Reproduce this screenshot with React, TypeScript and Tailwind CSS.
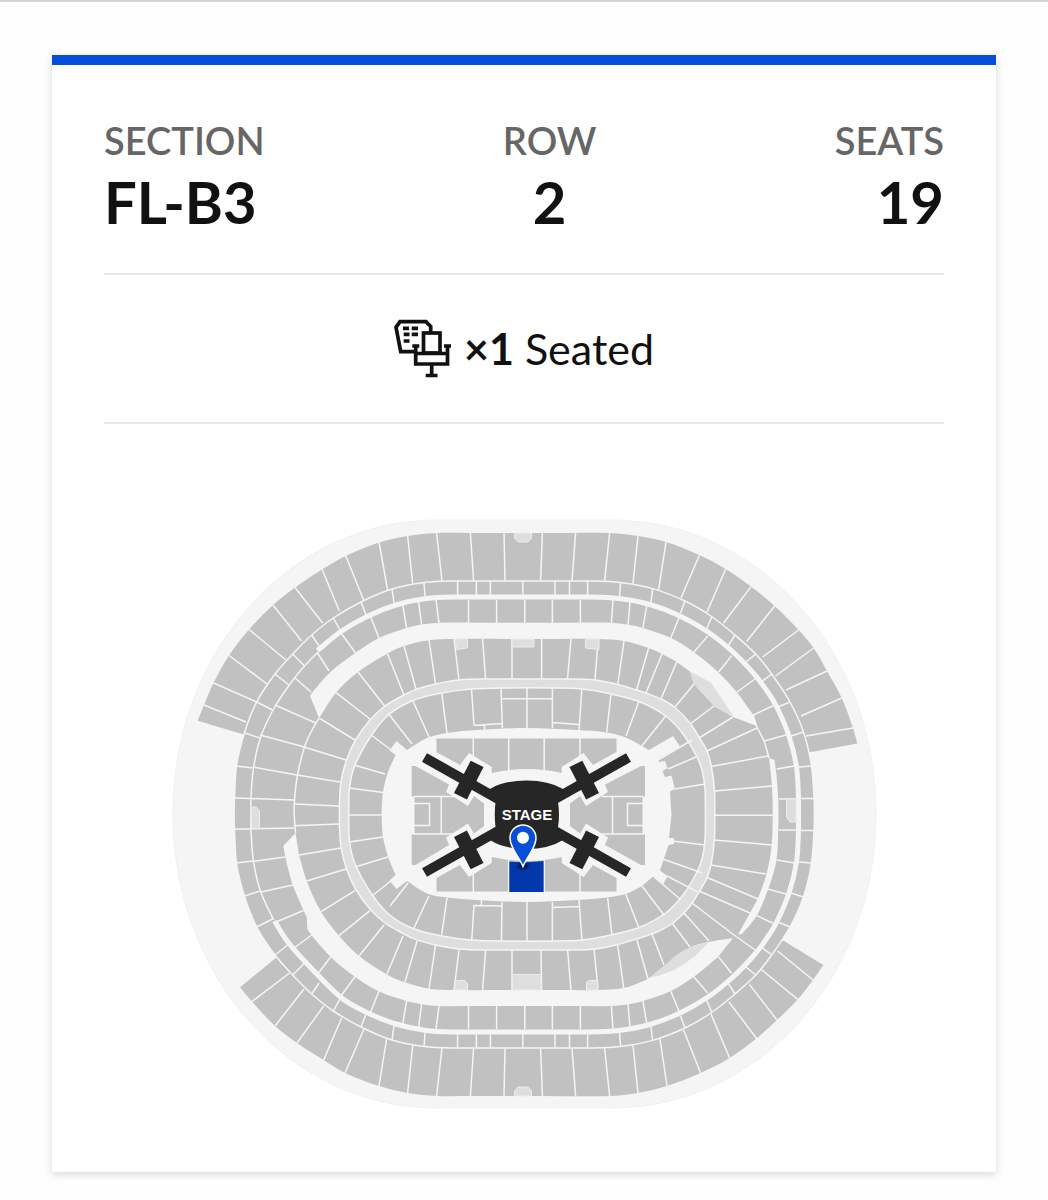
import React from "react";

type Pt = [number, number];
type Seg = [number, number, number, number];

const MID = 1629;

const r = (n: number) => Math.round(n * 10) / 10;

/** Smooth curve through the points, starting with the first point's coordinates. */
function curve(p: Pt[]): string {
  let d = `${p[0][0]},${p[0][1]}`;
  for (let i = 0; i < p.length - 1; i++) {
    const a = p[i - 1] ?? p[i];
    const b = p[i];
    const c = p[i + 1];
    const e = p[i + 2] ?? c;
    const len = Math.hypot(c[0] - b[0], c[1] - b[1]);
    const k1 = len / (Math.hypot(c[0] - a[0], c[1] - a[1]) || 1) / 3;
    const k2 = len / (Math.hypot(e[0] - b[0], e[1] - b[1]) || 1) / 3;
    d += ` C${r(b[0] + (c[0] - a[0]) * k1)},${r(b[1] + (c[1] - a[1]) * k1)} ${r(c[0] - (e[0] - b[0]) * k2)},${r(c[1] - (e[1] - b[1]) * k2)} ${c[0]},${c[1]}`;
  }
  return d;
}

const flip = (p: Pt[]): Pt[] => p.map(([x, y]) => [x, MID - y] as Pt);
const back = (p: Pt[]): Pt[] => [...p].reverse();
const ring = (top: Pt[]) => `M${curve([...top, ...back(flip(top))])}Z`;
const lines = (s: Seg[]) => s.map(([a, b, c, d]) => `M${a} ${b}L${c} ${d}`).join("");
const flipSegs = (s: Seg[]): Seg[] => s.map(([a, b, c, d]) => [a, MID - b, c, MID - d]);

const upperTop: Pt[] = [
  [197.7, 720.7], [204, 705], [213.5, 683], [229, 655.5], [249, 629.5], [273, 605], [295, 587.5], [322, 569.5],
  [345.7, 556], [379, 542.5], [407.6, 536], [436.6, 533], [470, 533], [542, 533], [609.5, 533], [638, 536],
  [666, 542], [699.5, 555], [725.7, 569], [751, 586.6], [774.7, 606], [798.6, 630], [813.6, 648], [827, 671],
  [841.7, 698], [853, 728], [857.3, 743.6],
];
const upperBottom: Pt[] = [
  [240, 987.3], [252, 1001.5], [275, 1026], [297, 1043], [323.6, 1060], [345, 1073], [379, 1086], [407.6, 1093],
  [436.6, 1096], [470, 1096], [542, 1096], [609.5, 1096], [638, 1093], [667, 1086], [700.6, 1073], [729.6, 1058],
  [757, 1038], [777, 1020], [798, 999], [813, 980], [823.3, 965],
];
const clubOuter: Pt[] = [
  [234, 814], [234.5, 798], [236.5, 766], [244.5, 732.7], [256.7, 702], [275, 674], [292.7, 654], [311.7, 635],
  [333.3, 618], [361, 602], [392, 589], [424, 582.5], [457.6, 581], [523, 581], [588, 581], [620.6, 582.5],
  [652.6, 588.6], [685, 601], [711.6, 616.5], [735, 635], [755.7, 654], [771.7, 674], [790, 702], [803.5, 732],
  [811.5, 766], [814, 798], [814.5, 814],
];
const clubInner: Pt[] = [
  [251, 814], [251, 798], [253.5, 768], [260.5, 737.7], [273.6, 709], [290, 684], [304.5, 666], [318, 652],
];
const aisle: Pt[] = [
  [317.5, 650.5], [341, 631.5], [368, 616], [396, 605], [426, 598.5], [457, 597], [523, 597], [588, 597],
  [619, 598.5], [650, 604.5], [680, 616], [708, 632], [733, 652], [755, 675], [768, 692.5], [777, 707.5],
  [789, 736], [796.5, 767], [798.5, 799], [798.5, 814],
];
const aisleFull: Pt[] = [...aisle, ...back(flip(aisle)).slice(1, -1), [298, 954], [285, 938], [274.5, 921]];
const terraceInnerTop: Pt[] = [
  [312.6, 692], [331, 671.5], [355.6, 652.8], [379, 638], [406.6, 628], [421.6, 624.6], [439, 622.8], [480, 622.8],
  [570, 622.8], [610, 622.8], [628.6, 624.8], [643, 628], [670.6, 637.8], [693.6, 652], [718, 672], [736.6, 692],
  [753, 714.5],
];
const lowerOuterTop: Pt[] = [
  [319, 718], [336, 692.7], [358, 672], [387.6, 653.5], [404, 646], [429, 640.3], [454, 639], [512, 639],
  [560, 639], [597, 639], [624, 641], [648.6, 648], [662, 654], [676.7, 662], [690, 671.5],
];
const lowerLeft: Pt[] = [
  [319, 718], [311, 732], [304.5, 747], [297.5, 775], [294.5, 800], [294.2, 814], [295.5, 833],
];
const walkOuter: Pt[] = [
  [339.5, 814], [339.5, 803], [341, 781.6], [346.5, 760], [355.5, 740], [370, 720], [385, 706], [404, 695],
  [416, 689.4], [435.5, 684], [459, 680], [486, 679], [527, 679], [567, 679], [595, 680], [617.6, 684.5],
  [636.6, 690], [646, 693], [661, 699], [675, 707.5], [690, 723], [699.5, 738], [707, 751], [711.5, 767],
  [714.5, 791], [714.7, 814],
];
const walkInner: Pt[] = [
  [348.7, 814], [349.5, 788], [355, 765], [371.7, 735], [389, 714.5], [413, 700.5], [441.7, 693], [471, 689],
  [501, 688], [552, 688], [581.7, 689], [611, 694], [639, 701.5], [665.7, 716], [683, 734], [697, 757],
  [702.5, 772], [705, 790], [705.5, 814],
];

const upperDividers: Seg[] = [
  [204, 705, 246, 722], [213.5, 683, 256.7, 702], [229, 655.5, 267, 684], [249, 629.5, 286, 660],
  [273, 605, 301.6, 641], [295, 587.5, 322.6, 623], [322, 569, 339.3, 611], [345.7, 555.7, 363.6, 600],
  [379, 542, 387.6, 590], [407.6, 536, 412.7, 583.5],
  [436.6, 533, 442, 581], [470.4, 533, 473.6, 581], [504, 533, 505, 581], [542.4, 533, 540.6, 581],
  [575.6, 533, 572, 581], [609.6, 533, 604.6, 581], [638, 536, 633, 583.5], [666, 542, 658.6, 590],
  [699.5, 555, 681, 598], [725.7, 569, 707, 612], [751, 586.6, 723.6, 623], [774.7, 606, 746.6, 641.5],
  [798.6, 630, 762.6, 657], [813.6, 648, 775.6, 676], [827, 671, 786, 690], [841.7, 698, 801, 716],
  [853, 728, 806, 736],
];
const upperBottomDividers: Seg[] = [
  [252, 1001.5, 289.6, 973], [275, 1026, 304, 989], [297, 1043, 323.6, 1006], [323.6, 1060, 341.6, 1018],
  [345, 1073, 364, 1029], [379, 1086, 386.6, 1039], ...flipSegs(upperDividers.slice(9, 17)),
  [667, 1086, 660, 1039], [700.6, 1073, 683.6, 1030], [729.6, 1058, 711, 1014], [757, 1039, 729, 1002],
  [777, 1020, 749.6, 984.6], [798, 999.6, 760.6, 969], [813, 980, 777.6, 951],
];
const clubDividers: Seg[] = [
  [234.5, 798, 251, 798.5], [236, 766, 253, 768], [244, 732.7, 260, 738], [256.7, 702, 272.5, 710],
  [275, 674, 289, 685], [292.7, 654, 304.6, 666], [311.7, 635, 319, 646], [333.3, 618, 340, 630],
  [361, 602, 366, 615], [392, 589, 394, 603], [424, 582.5, 425, 596], [457.6, 581, 457.6, 595],
  [476.4, 581, 476.4, 595], [490.4, 581, 490.4, 595], [522.8, 581, 522.8, 595], [555, 581, 555, 595],
  [569.5, 581, 569.5, 595], [587.6, 581, 587.6, 595], [620.6, 582.5, 619.6, 596], [652.6, 589, 651, 602],
  [685, 601, 680.5, 613], [711.7, 617, 706.5, 629], [735, 635, 728, 646], [755.7, 654, 746, 662],
  [772, 674, 761, 682], [790, 702, 778, 707], [803.5, 732, 791, 736], [811.5, 766, 799, 767],
  [814, 798.5, 800, 798.5],
];
const terraceDividers: Seg[] = [
  [341.7, 634, 355.6, 653], [370.7, 617, 379, 638], [402.7, 604.7, 406.6, 628], [418.6, 601.6, 421.6, 625],
  [436, 600, 439, 623], [468.5, 600, 468.5, 623], [496.6, 600, 496.6, 623], [524.8, 600, 524.8, 623],
  [552.4, 600, 552.4, 623], [580.4, 600, 580.4, 623], [613, 600, 611.4, 623], [630, 601.6, 628, 625],
  [646.6, 606, 643, 628], [679, 618, 670.7, 638], [707.7, 636, 693.6, 652.6], [731.7, 655.7, 718.6, 672],
  [755, 679, 737, 692], [773, 705.7, 753.5, 715], [786, 735, 764, 741], [794.6, 766, 776.7, 769],
  [796.6, 799, 778.6, 799],
];
const terraceLeft: Seg[] = [
  [251, 798.5, 294, 800], [253, 767, 297, 775], [260, 735, 304.6, 747], [275, 705, 315.6, 723],
  [295, 678, 311, 692], [317.6, 653, 329, 671],
  [234, 829.3, 294, 828], [252, 861.5, 285, 857], [261, 892, 293, 885], [275, 922.5, 303.5, 910.5],
  [294, 948, 311.7, 935], [317.7, 974, 330.7, 957],
];
const lowerTopDividers: Seg[] = [
  [294.3, 804, 339.5, 806], [297, 775, 340, 782], [304, 747, 346, 760], [319, 718, 355, 740],
  [336, 692.7, 370, 719], [358, 672, 385, 706.5], [387.6, 654, 404, 695], [404, 646, 416, 689],
  [429, 640, 435.5, 684], [454, 639, 459, 680], [482.6, 639, 485.6, 679], [512, 639, 512, 679],
  [541.6, 639, 541.6, 679], [571, 639, 567.5, 679], [598, 641, 595, 680], [624, 641, 617.7, 685],
  [648.6, 648, 636.6, 690], [662, 654, 646, 693], [676.7, 662, 661, 699], [694, 684, 675, 707],
  [714, 706, 690, 724], [733, 717, 699, 738], [757, 728, 707, 751], [768, 756, 711, 766.5],
  [772, 786, 714.7, 791], [772.7, 815.3, 671, 815.3],
];
const lowerBottomDividers: Seg[] = [
  [294, 825.7, 339.5, 824], [299, 855, 341, 848], [306.7, 881, 346, 869], [321, 911.7, 355, 890.7],
  [339, 935.7, 370, 910.7], [359, 956, 384, 925], [387, 974, 403, 936], [405, 982, 417, 941],
  [429, 989, 435.5, 945], [454, 990, 459, 950], [482.6, 990, 485.6, 950], [512, 990, 512, 950],
  [541.6, 990, 541, 950], [571, 990, 567.6, 950], [598, 988, 594, 949], [623.7, 988, 617.7, 945],
  [648, 979, 637, 940], [664, 965, 652, 934], [690, 947, 672, 923], [709, 941, 683, 912],
  [736.7, 937, 690.7, 902], [750, 913, 699, 891], [758, 899, 706, 877], [766, 874, 711, 865],
  [772, 845, 714, 840],
];
const innerDividers: Seg[] = [
  [348, 815, 382, 815], [349, 788, 383, 792.5], [354, 765, 385, 774], [371.7, 735.5, 394, 752],
  [388, 713, 412, 744], [413, 701, 429, 737], [441.7, 693, 447, 733], [471.5, 689, 474, 725.5],
  [474, 725.5, 502, 723.5], [484.5, 725, 484.5, 730], [501, 688, 502.4, 728], [527, 688, 527, 728],
  [502, 698.7, 552, 698.7], [552.4, 688, 552.4, 728], [581.7, 690, 579, 731], [552, 722.5, 579, 724.5],
  [611, 694, 606.7, 732], [639, 701, 626, 736], [665.7, 716, 641, 747], [658, 760, 692, 740],
  [668, 769, 696, 757], [675, 789, 705, 784],
  [383, 837, 349, 842], [388, 857, 355, 867], [392, 880, 372, 896], [408, 883, 390, 906],
  [429, 895.7, 414, 928], [447, 898, 441.5, 936], [474, 905, 471.7, 941], [474, 905.5, 502, 906],
  [481.4, 900, 481.4, 905], [502, 902, 501.4, 941], [527, 902, 527, 941], [552.4, 902, 552.4, 941],
  [552, 907.6, 579.5, 906.4], [579, 900, 582, 941], [607.7, 898, 612, 935.7], [625.7, 894, 639, 928],
  [672, 841, 705, 845], [662.7, 859, 701.7, 872.7], [667, 876, 697, 891.7], [653, 876, 680, 899],
  [642, 886, 664, 915],
];

const SEAT = "#c1c1c1";
const LIGHT = "#f5f5f5";
const PALE = "#dedede";

const floorTop =
  "M436.5,738.5 H616.5 V752 L593,765 L583.5,753 L561.7,767 V773 Q527,765 491.7,773 V767 L469,753 L460,765 L436.5,752Z";
const floorLeft =
  "M411.7,766 H415.5 L449,784.5 L446,792 L468,806 L474,796 L484,803.5 V826 L474,833.5 L468,823.5 L446,837.5 L449,845 L415.5,865 H411.7 V834.5 H414.5 V796.5 H411.7Z";
const floorRight =
  "M645,766 H641 L605,784.5 L608,792 L586,806 L580,796 L570,803.5 V826 L580,833.5 L586,823.5 L608,837.5 L605,845 L641,865 H645 V834.5 H642.5 V796.5 H645Z";

function StageArm() {
  return (
    <g>
      <path d="M424.5 757.5L498 799" stroke="#262626" strokeWidth="10" />
      <path d="M470.7,760.7 L483.5,767 L466.9,799.5 L454,793Z" fill="#262626" />
    </g>
  );
}

function SeatMap() {
  return (
    <svg viewBox="104 500 840 630" className="block h-auto w-full" role="img" aria-label="Venue seat map">
      <defs>
        <radialGradient id="pin-shadow">
          <stop offset="0" stopColor="#000" stopOpacity="0.75" />
          <stop offset="1" stopColor="#000" stopOpacity="0" />
        </radialGradient>
      </defs>
      <path
        d="M437,520 H612 C758,520 876,650 876,814 C876,978 758,1108 612,1108 H437 C291,1108 173,978 173,814 C173,650 291,520 437,520Z"
        fill={LIGHT}
        stroke="#f1f1f1"
      />
      <path d={`M${curve(upperTop)} L811,752 L242,734Z`} fill={SEAT} />
      <path d={`M${curve(upperBottom)} L784,941 L277,957Z`} fill={SEAT} />
      <g stroke={LIGHT} strokeWidth="1.5" fill="none">
        <path d={lines(upperDividers)} />
        <path d={lines(upperBottomDividers)} />
        <path d={ring(clubOuter)} fill={SEAT} />
        <path d={lines(clubDividers)} />
        <path d={lines(flipSegs(clubDividers.slice(1)))} />
        <path d={`M${curve([...back(clubInner), ...flip(clubInner).slice(1, 5)])}`} />
        <path d={lines(terraceDividers)} />
        <path d={lines(flipSegs(terraceDividers))} />
        <path d={lines(terraceLeft)} />
        <path d={`M${curve(lowerLeft)}`} />
        <path d={`M${curve([[753, 714.5], [757, 727], [764, 741], [769, 758]])}`} />
        <path d={lines(lowerTopDividers)} />
        <path d={lines(lowerBottomDividers)} />
      </g>
      <path d={`M${curve(aisleFull)}`} stroke={LIGHT} strokeWidth="5" fill="none" />
      <g fill={LIGHT}>
        <path
          d={`M319,718 L310,696 L${curve(terraceInnerTop)} L757,726 L733,717 L714,706 L694,684 L${curve(back(lowerOuterTop))}Z`}
        />
        <path
          d={`M769,758 L774.5,760 L${curve([[776.5, 775], [778.2, 799], [778.5, 815], [778.2, 830], [776.5, 860], [768.6, 888], [756.7, 915.7], [742, 934]])} L738,934.5 L${curve([[750, 913], [758, 898], [766.5, 874], [771.7, 845], [772.7, 815], [772, 786], [769, 758]])}Z`}
        />
        <path
          d={`M733,938 L${curve([[718, 957], [693.6, 977], [670.6, 991], [643, 1001], [628.6, 1004.2], [610, 1006], [570, 1006], [480, 1006], [439, 1006], [421.6, 1004.2], [406.6, 1001], [378, 991], [354.5, 976.5], [330.7, 957], [311.7, 935.5]])} L307.3,929 L306.7,917 L${curve([[303.3, 910], [292.7, 885], [286, 860], [283.3, 846]])} L295.5,833 L${curve([[299, 855], [306.7, 881], [321, 911.7], [339, 935.7], [359, 956], [387, 974.5], [404, 982], [429, 988.7], [454, 990], [512, 990], [560, 990], [597, 990], [624, 988], [648, 979]])} L${curve([[664, 966], [690, 947.5], [709, 942], [733, 938]])}Z`}
        />
      </g>
      <path d="M690,671.5 L711,682.5 L732,714 L733,717 L714,706 L694,684Z" fill={PALE} />
      <path
        d={`M648,978.5 L${curve([[664, 966], [678, 954], [690, 947.5], [709, 942]])} L${curve([[695, 956], [674, 970], [648, 978.5]])}Z`}
        fill={PALE}
      />

      <g fill={PALE} stroke="#ececec" strokeWidth="1">
        <path d="M514.5,533 H531.5 V538 L528,542 H518 L514.5,538Z" />
        <path d="M514.5,1096 H531.5 V1091 L528,1087 H518 L514.5,1091Z" />
        <path d="M454.5,639 H467.5 V648 L457,649.5Z" />
        <path d="M512,639 H534 V647 H512Z" />
        <path d="M585.5,639 H599 V649.5 L585.5,648Z" />
        <path d="M454.5,990 L456,980.5 H465 L467.5,984 V990Z" />
        <path d="M512.5,974.5 H541 V990 H512.5Z" />
        <path d="M586.5,990 V982 L589,980.5 H597 L598,990Z" />
        <path d="M251.5,807 H256 L259.5,811 V828.5 H251.5Z" />
        <path d="M796,799 H786.5 V817 L790,822 H796Z" />
      </g>

      <path d={ring(walkOuter)} fill={PALE} stroke={LIGHT} strokeWidth="1.5" />
      <path d={ring(walkInner)} fill={SEAT} stroke={LIGHT} strokeWidth="1.5" />
      <path d={lines(innerDividers)} stroke={LIGHT} strokeWidth="1.5" />
      <path
        d={`M${curve([[407, 750], [427, 738], [447, 733], [477, 730], [527, 728], [577, 730], [607, 732.5], [627, 738], [649, 750]])} L673,736 L680,746.5 L658,759 L659,762 L665,761 L667.5,768 L662.5,771 L665,777 L671.5,775.5 L675,789 L670,791.5 L${curve([[671.5, 815], [669, 838]])} H674 V844 L668.5,845 L660,870.5 L667.5,876 L663.5,884 L653,876.5 L${curve([[642, 886], [627, 893.5], [607, 897.5], [577, 900], [527, 902], [477, 900], [447, 897.5], [427, 893.5], [407, 881]])} L396.5,889 L389.5,880.5 L395.5,875 L${curve([[388, 857], [383, 837], [381.7, 814], [383, 792], [388, 772], [395.5, 755]])} L389.5,750.5 L396.5,741Z`}
        fill={LIGHT}
      />
      <g fill={SEAT}>
        <path d={floorTop} />
        <path d={floorTop} transform="translate(0 1630) scale(1 -1)" />
        <path d={floorLeft} />
        <path d={floorRight} />
      </g>
      <path
        d="M473.3 738V760M508.7 738V775M544.2 738V775M580 738V760M473.3 892V870M580 892V870M508.7 892V858M544.2 892V858M414 796.5H455M414 834H455M602 796.5H643M602 834H643M441.3 796V834M612.5 796V834M414 803.5H429.5V825.5H414M643 803.5H627.5V825.5H643"
        stroke={LIGHT}
        strokeWidth="1.5"
        fill="none"
      />
      <path d="M509.3,861.5 Q526,863 543.6,861 V892 H509.3Z" fill="#0338ac" />

      <StageArm />
      <g transform="translate(1053 0) scale(-1 1)">
        <StageArm />
      </g>
      <g transform="translate(0 1630) scale(1 -1)">
        <StageArm />
      </g>
      <g transform="translate(1053 1630) scale(-1 -1)">
        <StageArm />
      </g>
      <path
        d="M490,789 Q504,780.5 526.5,780.5 T563,789 L558,802 Q560,815 558,827 L563,840 Q549,849 526.5,849 T490,840 L495.5,827 Q494,815 495.5,802Z"
        fill="#262626"
      />
      <text
        x="527"
        y="820"
        textAnchor="middle"
        fill="#fff"
        className="text-[15px] font-bold [font-family:'Liberation_Sans',sans-serif]"
      >
        STAGE
      </text>

      <ellipse cx="523" cy="866" rx="8" ry="5" fill="url(#pin-shadow)" />
      <path
        d="M523,866.5 C519,856 510,848.5 510,838 A13,13 0 0 1 536,838 C536,848.5 527,856 523,866.5Z"
        fill="#0a4fd8"
        stroke="#fff"
        strokeWidth="1.5"
      />
      <circle cx="523" cy="837.8" r="6" fill="#fff" />
    </svg>
  );
}

function SeatIcon() {
  return (
    <svg viewBox="0 0 58 59" className="h-[59px] w-[58px] shrink-0" fill="none" stroke="#111" strokeWidth="3.7" aria-hidden="true">
      <path d="M36.7 13V7.5L32 2.7H6L2 8.3L6.7 32.7H20" />
      <rect x="29.5" y="14" width="16.5" height="20" />
      <path d="M18.3 27H25.3M50 27H57M21.7 27V45H53.5V27M21.7 34.5H53.5M37.7 45V56M31.7 56.5H43.5" />
      <path d="M9 9.3H15M17.7 9.3H24M9.7 15.3H15.5M17.7 15.3H24M9.7 22H15.5" />
    </svg>
  );
}

const details = [
  { label: "SECTION", value: "FL-B3", align: "text-left" },
  { label: "ROW", value: "2", align: "text-center" },
  { label: "SEATS", value: "19", align: "text-right" },
];

export default function App() {
  return (
    <main className="min-h-screen border-t-2 border-[#d4d4d4] bg-[#fefefe] px-[52px] pt-[53px] pb-[26px] text-[#111] [font-family:Lato,sans-serif]">
      <article className="border-t-[10px] border-[#054fdb] bg-white px-[52px] pb-[42px] shadow-[0_3px_8px_rgba(0,0,0,0.14)]">
        <dl className="flex justify-between border-b-2 border-[#e8e8e8] pt-[52px] pb-[32px]">
          {details.map((d) => (
            <div key={d.label} className={d.align}>
              <dt className="text-[38px] leading-[46px] font-semibold text-[#666]">{d.label}</dt>
              <dd className="text-[58px] leading-[78px] font-bold">{d.value}</dd>
            </div>
          ))}
        </dl>
        <div className="flex h-[149px] items-center justify-center gap-[12px] border-b-2 border-[#e8e8e8]">
          <SeatIcon />
          <p className="text-[43px] leading-[50px]">
            <strong className="font-bold">×1</strong> Seated
          </p>
        </div>
        <div className="pt-[76px]">
          <SeatMap />
        </div>
      </article>
    </main>
  );
}
